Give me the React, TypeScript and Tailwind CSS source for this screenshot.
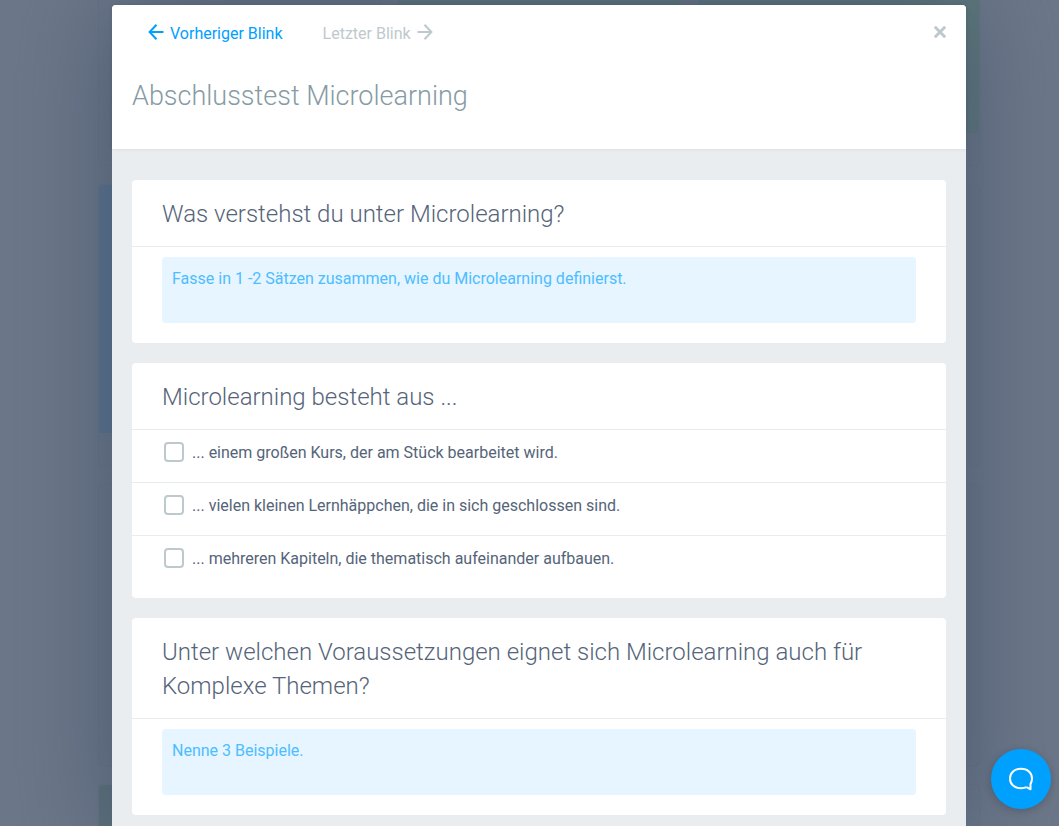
import { useState } from "react";

type Question =
  | { id: string; kind: "text"; title: string; placeholder: string }
  | { id: string; kind: "choice"; title: string; options: string[] };

const questions: Question[] = [
  {
    id: "definition",
    kind: "text",
    title: "Was verstehst du unter Microlearning?",
    placeholder: "Fasse in 1 -2 Sätzen zusammen, wie du Microlearning definierst.",
  },
  {
    id: "parts",
    kind: "choice",
    title: "Microlearning besteht aus ...",
    options: [
      "... einem großen Kurs, der am Stück bearbeitet wird.",
      "... vielen kleinen Lernhäppchen, die in sich geschlossen sind.",
      "... mehreren Kapiteln, die thematisch aufeinander aufbauen.",
    ],
  },
  {
    id: "complex",
    kind: "text",
    title: "Unter welchen Voraussetzungen eignet sich Microlearning auch für Komplexe Themen?",
    placeholder: "Nenne 3 Beispiele.",
  },
];

// cover colors of the dimmed course tiles, row by row
const tiles = [
  "bg-[#6b7688]",
  "bg-[#5c7779]",
  "bg-[#5c7779]",
  "bg-[#56718f]",
  "bg-[#6b7688]",
  "bg-[#6b7688]",
  "bg-[#6b7688]",
  "bg-[#6b7688]",
  "bg-[#6b7688]",
  "bg-[#5b6f79]",
  "bg-[#6b7688]",
  "bg-[#6b7688]",
];

function ArrowIcon({ right = false }: { right?: boolean }) {
  return (
    <svg
      viewBox="0 0 16 16"
      className={right ? "h-4 w-4 rotate-180" : "h-4 w-4"}
      fill="none"
      stroke="currentColor"
      strokeWidth="2"
      aria-hidden="true"
    >
      <path d="M8.5 0.7 1.6 8l6.9 7.3M1.4 8H15.5" />
    </svg>
  );
}

function TileGrid() {
  return (
    <div className="absolute inset-0 overflow-hidden pl-[19px]" aria-hidden="true">
      <div className="mx-auto -mt-[115px] grid max-w-[880px] grid-cols-3 gap-5">
        {tiles.map((cover, i) => (
          <div
            key={i}
            className="h-[280px] overflow-hidden rounded bg-[#6b7688] shadow-[0_0_2px_rgba(60,75,95,0.25)]"
          >
            <div className={`h-[248px] ${cover}`} />
          </div>
        ))}
      </div>
    </div>
  );
}

function QuestionCard({ question }: { question: Question }) {
  const [checked, setChecked] = useState<string[]>([]);
  const titleId = `title-${question.id}`;

  const toggle = (option: string) =>
    setChecked((prev) =>
      prev.includes(option) ? prev.filter((o) => o !== option) : [...prev, option]
    );

  return (
    <section className="overflow-hidden rounded bg-white">
      <h2
        id={titleId}
        className="border-b border-[#e9edf0] px-[30px] pt-[17px] pb-[15px] text-2xl leading-[34px] font-light text-[#556479]"
      >
        {question.title}
      </h2>
      {question.kind === "text" ? (
        <div className="px-[30px] pt-2.5 pb-5">
          <textarea
            aria-labelledby={titleId}
            placeholder={question.placeholder}
            className="block h-[66px] w-full resize-none rounded bg-[#e6f5ff] px-2.5 py-2.5 text-base text-[#556479] outline-none placeholder:text-[#4dbdff]"
          />
        </div>
      ) : (
        <div className="divide-y divide-[#e9edf0] pb-[9px]">
          {question.options.map((option) => (
            <label
              key={option}
              className="flex h-[53px] items-start gap-2 px-8 pt-3 text-base leading-[22px] text-[#556479]"
            >
              <input
                type="checkbox"
                checked={checked.includes(option)}
                onChange={() => toggle(option)}
                className="h-5 w-5 shrink-0 appearance-none rounded border-2 border-[#bec9cd] bg-white checked:bg-[#00a0ff]"
              />
              {option}
            </label>
          ))}
        </div>
      )}
    </section>
  );
}

export default function App() {
  return (
    <div className="relative h-screen overflow-hidden bg-[#6c7789] font-['Roboto',sans-serif]">
      <TileGrid />

      <div className="relative pt-[5px] pl-[19px]">
        <div
          role="dialog"
          aria-labelledby="dialog-title"
          className="mx-auto max-w-[854px] rounded bg-[#e9edf0] shadow-[0_0_100px_#4a596f]"
        >
          <header className="h-36 rounded-t bg-white px-5 pt-[19px] shadow-[0_0_4px_rgba(0,0,0,0.08)]">
            <div className="flex items-start justify-between">
              <nav className="flex gap-10 pl-4 text-base leading-5">
                <a href="#prev" className="flex gap-1.5 text-[#00a0ff]">
                  <ArrowIcon />
                  Vorheriger Blink
                </a>
                <a href="#next" className="flex gap-1.5 text-[#bec9cd]">
                  Letzter Blink
                  <ArrowIcon right />
                </a>
              </nav>
              <button type="button" aria-label="Schließen" className="mt-0.5 text-[#bec9cd]">
                <svg viewBox="0 0 12 12" className="h-3 w-3" stroke="currentColor" strokeWidth="3">
                  <path d="M0.800 0.800l10.400 10.400M11.200 0.800L0.800 11.200" />
                </svg>
              </button>
            </div>
            <h1
              id="dialog-title"
              className="mt-8 text-[27px] leading-10 font-light text-[#869ba5]"
            >
              Abschlusstest Microlearning
            </h1>
          </header>

          <div className="space-y-5 px-5 pt-[31px] pb-5">
            {questions.map((question) => (
              <QuestionCard key={question.id} question={question} />
            ))}
          </div>
        </div>
      </div>

      <button
        type="button"
        aria-label="Chat öffnen"
        className="absolute right-2 bottom-[17px] flex h-[60px] w-[60px] items-center justify-center rounded-full bg-[#00a0ff] text-white shadow-[0_2px_8px_rgba(0,0,0,0.2)]"
      >
        <svg
          viewBox="0 0 24 24"
          className="h-6 w-6"
          fill="none"
          stroke="currentColor"
          strokeWidth="2"
          strokeLinejoin="round"
          aria-hidden="true"
        >
          <path d="M17.500 20.200C16 20.900 14.500 21.200 12 21.200C5.500 21.200 1 17.500 1 11.500S5.500 1.800 12 1.800S23 5.500 23 11.500C23 13.800 22.300 15.600 21.500 17V22.300L17.500 20.200" />
        </svg>
      </button>
    </div>
  );
}
